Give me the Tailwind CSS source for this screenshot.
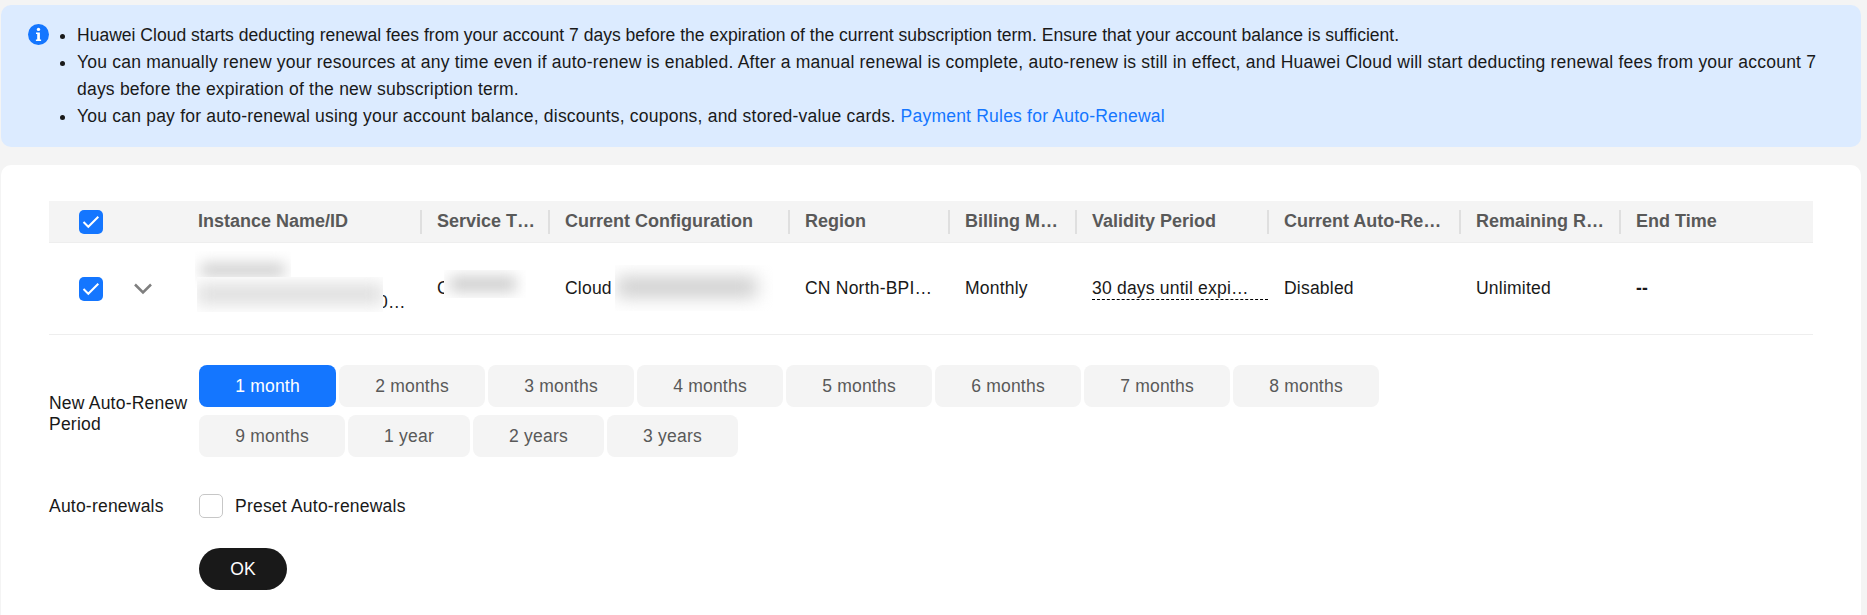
<!DOCTYPE html>
<html lang="en">
<head>
    <meta charset="UTF-8">
    <meta name="viewport" content="width=device-width, initial-scale=1.0">
    <title>Auto-Renew</title>
    <script src="https://cdn.jsdelivr.net/npm/@tailwindcss/browser@4"></script>
</head>
<body class="bg-[#f4f4f4] h-screen overflow-hidden font-['Liberation_Sans',Arial,sans-serif] text-[17.55px] tracking-[0.2px] text-[#191919]">

    <!-- Notice banner -->
    <div class="ml-px mt-[5px] w-[1860px] h-[142px] bg-[#dcebff] rounded-[10px] flex pt-[17px] pl-[27px]">
        <svg class="w-[21px] h-[21px] mt-[2px] shrink-0" viewBox="0 0 21 21">
            <circle cx="10.5" cy="10.5" r="10.5" fill="#1476ff"/>
            <circle cx="10.5" cy="5.4" r="1.7" fill="#fff"/>
            <path d="M8 8.4h3.9v7h1.2v1.5H7.9v-1.5h1.3v-5.5H8z" fill="#fff"/>
        </svg>
        <ul class="list-disc ml-[28px] w-[1750px] leading-[27px]">
            <li class="tracking-normal">Huawei Cloud starts deducting renewal fees from your account 7 days before the expiration of the current subscription term. Ensure that your account balance is sufficient.</li>
            <li>You can manually renew your resources at any time even if auto-renew is enabled. After a manual renewal is complete, auto-renew is still in effect, and Huawei Cloud will start deducting renewal fees from your account 7 days before the expiration of the new subscription term.</li>
            <li>You can pay for auto-renewal using your account balance, discounts, coupons, and stored-value cards. <a href="#" class="text-[#1476ff]">Payment Rules for Auto-Renewal</a></li>
        </ul>
    </div>

    <!-- Main card -->
    <div class="ml-px mt-[18px] w-[1860px] h-[468px] bg-white rounded-t-[10px] pt-[36px] px-[48px]">

        <!-- Table header -->
        <div class="w-[1764px] h-[42px] bg-[#f4f4f4] border-b border-[#eeeeee] grid grid-cols-[133px_239px_128px_240px_160px_127px_192px_192px_160px_193px] items-center font-bold text-[18px] tracking-normal text-[#595959]">
            <div class="pl-[30px]">
                <span class="w-[24px] h-[24px] rounded-[5px] bg-[#1476ff] flex items-center justify-center">
                    <svg class="w-[24px] h-[24px]" viewBox="0 0 24 24" fill="none" stroke="#fff" stroke-width="2"><path d="M4.5 12l4.8 4.8 10-10"/></svg>
                </span>
            </div>
            <div class="pl-[16px] mr-[-1px] h-[24px] leading-[22px] whitespace-nowrap border-r-2 border-[#dfdfdf]">Instance Name/ID</div>
            <div class="pl-[16px] mr-[-1px] h-[24px] leading-[22px] whitespace-nowrap border-r-2 border-[#dfdfdf]">Service T…</div>
            <div class="pl-[16px] mr-[-1px] h-[24px] leading-[22px] whitespace-nowrap border-r-2 border-[#dfdfdf]">Current Configuration</div>
            <div class="pl-[16px] mr-[-1px] h-[24px] leading-[22px] whitespace-nowrap border-r-2 border-[#dfdfdf]">Region</div>
            <div class="pl-[16px] mr-[-1px] h-[24px] leading-[22px] whitespace-nowrap border-r-2 border-[#dfdfdf]">Billing M…</div>
            <div class="pl-[16px] mr-[-1px] h-[24px] leading-[22px] whitespace-nowrap border-r-2 border-[#dfdfdf]">Validity Period</div>
            <div class="pl-[16px] mr-[-1px] h-[24px] leading-[22px] whitespace-nowrap border-r-2 border-[#dfdfdf]">Current Auto-Re…</div>
            <div class="pl-[16px] mr-[-1px] h-[24px] leading-[22px] whitespace-nowrap border-r-2 border-[#dfdfdf]">Remaining R…</div>
            <div class="pl-[16px] h-[24px] leading-[22px] whitespace-nowrap">End Time</div>
        </div>

        <!-- Table row -->
        <div class="w-[1764px] h-[92px] border-b border-[#eeeeee] grid grid-cols-[133px_239px_128px_240px_160px_127px_192px_192px_160px_193px] items-center">
            <div class="pl-[30px] flex items-center">
                <span class="w-[24px] h-[24px] rounded-[5px] bg-[#1476ff] flex items-center justify-center">
                    <svg class="w-[24px] h-[24px]" viewBox="0 0 24 24" fill="none" stroke="#fff" stroke-width="2"><path d="M4.5 12l4.8 4.8 10-10"/></svg>
                </span>
                <svg class="w-[20px] h-[12px] ml-[30px]" viewBox="0 0 20 12" fill="none" stroke="#7f7f7f" stroke-width="2.5"><path d="M2 1.5l8 8 8-8"/></svg>
            </div>
            <div class="relative h-[91px]">
                <span class="absolute left-[196px] top-[49px] leading-[21px]">0…</span>
                <div class="absolute left-[13px] top-[8px] w-[96px] h-[37px] bg-white overflow-hidden"><div class="mt-[12px] ml-[6px] w-[84px] h-[14px] bg-[#d0d0d0] blur-[7px]"></div></div>
                <div class="absolute left-[15px] top-[34px] w-[186px] h-[35px] bg-white overflow-hidden"><div class="mt-[6px] ml-[0px] w-[186px] h-[22px] bg-[#e0e0e0] blur-[8px]"></div></div>
            </div>
            <div class="pl-[16px] relative h-[91px] flex items-center">
                C
                <div class="absolute left-[23px] top-[27px] w-[82px] h-[28px] bg-white overflow-hidden"><div class="mt-[6px] ml-[6px] w-[66px] h-[16px] bg-[#cfcfcf] blur-[7px]"></div></div>
            </div>
            <div class="pl-[16px] relative h-[91px] flex items-center">
                Cloud
                <div class="absolute left-[66px] top-[22px] w-[158px] h-[46px] bg-white overflow-hidden"><div class="mt-[12px] ml-[2px] w-[140px] h-[20px] bg-[#cccccc] blur-[9px]"></div></div>
            </div>
            <div class="pl-[16px] whitespace-nowrap">CN North-BPI…</div>
            <div class="pl-[16px]">Monthly</div>
            <div class="pl-[16px]"><span class="block w-[176px] whitespace-nowrap border-b border-dashed border-black leading-[22px]">30 days until expi…</span></div>
            <div class="pl-[16px]">Disabled</div>
            <div class="pl-[16px]">Unlimited</div>
            <div class="pl-[16px] font-bold">--</div>
        </div>

        <!-- Renew period -->
        <div class="mt-[30px] flex">
            <div class="w-[150px] self-center mt-[6px] leading-[21px]">New Auto-Renew Period</div>
            <div class="w-[1200px] flex flex-wrap gap-x-[3px] gap-y-[8px] text-[#595959]">
                <button class="h-[42px] w-[137px] rounded-[8px] bg-[#1476ff] text-white">1 month</button>
                <button class="h-[42px] w-[146px] rounded-[8px] bg-[#f4f4f4]">2 months</button>
                <button class="h-[42px] w-[146px] rounded-[8px] bg-[#f4f4f4]">3 months</button>
                <button class="h-[42px] w-[146px] rounded-[8px] bg-[#f4f4f4]">4 months</button>
                <button class="h-[42px] w-[146px] rounded-[8px] bg-[#f4f4f4]">5 months</button>
                <button class="h-[42px] w-[146px] rounded-[8px] bg-[#f4f4f4]">6 months</button>
                <button class="h-[42px] w-[146px] rounded-[8px] bg-[#f4f4f4]">7 months</button>
                <button class="h-[42px] w-[146px] rounded-[8px] bg-[#f4f4f4]">8 months</button>
                <button class="h-[42px] w-[146px] rounded-[8px] bg-[#f4f4f4]">9 months</button>
                <button class="h-[42px] w-[122px] rounded-[8px] bg-[#f4f4f4]">1 year</button>
                <button class="h-[42px] w-[131px] rounded-[8px] bg-[#f4f4f4]">2 years</button>
                <button class="h-[42px] w-[131px] rounded-[8px] bg-[#f4f4f4]">3 years</button>
            </div>
        </div>

        <!-- Preset -->
        <div class="mt-[37px] flex items-center h-[24px]">
            <div class="w-[150px]">Auto-renewals</div>
            <span class="w-[24px] h-[24px] rounded-[5px] border border-[#c7c7c7] bg-white"></span>
            <span class="ml-[12px]">Preset Auto-renewals</span>
        </div>

        <div class="mt-[30px] ml-[150px]">
            <button class="w-[88px] h-[42px] rounded-[21px] bg-[#191919] text-white">OK</button>
        </div>
    </div>
</body>
</html>
